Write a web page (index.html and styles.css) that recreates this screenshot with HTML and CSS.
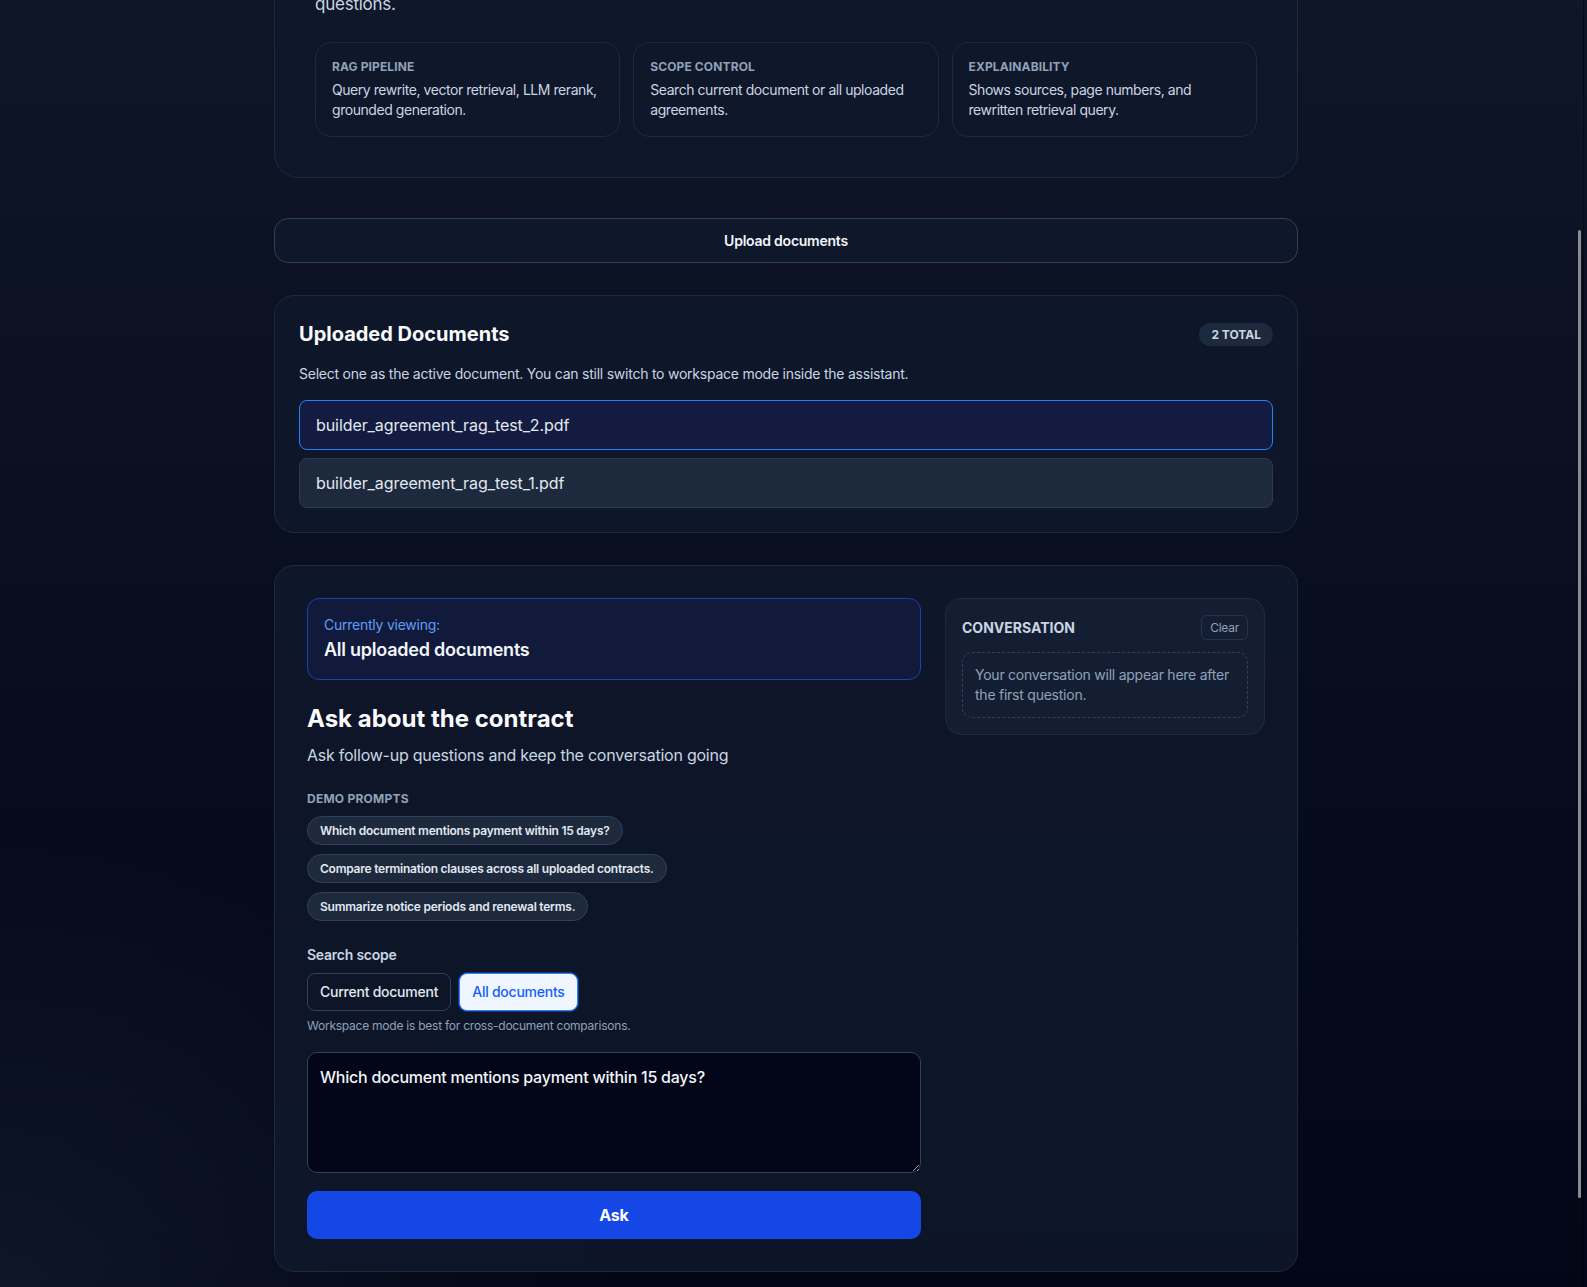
FILE: index.html
```html
<!DOCTYPE html>
<html lang="en">
<head>
  <meta charset="UTF-8">
  <title>Builder Agreement Assistant</title>
  <link rel="stylesheet" href="styles.css">
</head>
<body>

  <main class="page">

    <header class="topbar">
      <span class="brand">Contract Assistant</span>
      <span class="topbar-note">RAG demo</span>
    </header>

    <section class="card hero">
      <p class="eyebrow">Contract copilot</p>
      <h1>Builder Agreement Assistant</h1>
      <p class="hero-text">Upload builder agreements and get grounded, cited answers to your contract questions.</p>

      <div class="features">
        <div class="feature">
          <div class="feature-title">RAG Pipeline</div>
          <p>Query rewrite, vector retrieval, LLM rerank, grounded generation.</p>
        </div>
        <div class="feature">
          <div class="feature-title">Scope Control</div>
          <p>Search current document or all uploaded agreements.</p>
        </div>
        <div class="feature">
          <div class="feature-title">Explainability</div>
          <p>Shows sources, page numbers, and rewritten retrieval query.</p>
        </div>
      </div>
    </section>

    <button class="upload-btn" type="button">Upload documents</button>

    <section class="card docs">
      <div class="docs-head">
        <h2>Uploaded Documents</h2>
        <span class="badge">2 total</span>
      </div>
      <p class="docs-desc">Select one as the active document. You can still switch to workspace mode inside the assistant.</p>
      <div class="doc-list">
        <button class="doc-item active" type="button">builder_agreement_rag_test_2.pdf</button>
        <button class="doc-item" type="button">builder_agreement_rag_test_1.pdf</button>
      </div>
    </section>

    <section class="card assistant">
      <div class="ask-col">
        <div class="viewing">
          <div class="viewing-label">Currently viewing:</div>
          <div class="viewing-name">All uploaded documents</div>
        </div>

        <h2 class="ask-title">Ask about the contract</h2>
        <p class="ask-sub">Ask follow-up questions and keep the conversation going</p>

        <div class="small-label">Demo prompts</div>
        <div class="prompts">
          <button class="chip" type="button">Which document mentions payment within 15 days?</button>
          <button class="chip" type="button">Compare termination clauses across all uploaded contracts.</button>
          <button class="chip" type="button">Summarize notice periods and renewal terms.</button>
        </div>

        <div class="scope-label">Search scope</div>
        <div class="scope">
          <button class="scope-btn" type="button">Current document</button>
          <button class="scope-btn selected" type="button">All documents</button>
        </div>
        <p class="hint">Workspace mode is best for cross-document comparisons.</p>

        <textarea class="question">Which document mentions payment within 15 days?</textarea>
        <button class="ask-btn" type="button">Ask</button>
      </div>

      <aside class="conversation">
        <div class="conv-head">
          <span class="conv-title">Conversation</span>
          <button class="clear-btn" type="button">Clear</button>
        </div>
        <div class="conv-empty">Your conversation will appear here after the first question.</div>
      </aside>
    </section>

  </main>

  <div class="scroll-rail"><div class="scroll-thumb"></div></div>

  <script>
    // jump past the intro so the assistant is in view
    window.scrollTo(0, 305);

    // thin scroll indicator on the right edge
    const thumb = document.querySelector(".scroll-thumb");

    function updateThumb() {
      const vh = window.innerHeight;
      const total = document.documentElement.scrollHeight;
      thumb.style.top = (window.scrollY / total) * vh + "px";
      thumb.style.height = (vh / total) * vh + "px";
    }

    updateThumb();
    window.addEventListener("scroll", updateThumb);
  </script>

</body>
</html>
```

FILE: styles.css
```css
html {
  color-scheme: dark;
}

* {
  box-sizing: border-box;
}

body {
  margin: 0;
  padding-right: 15px;
  font-family: Inter, "Noto Sans", sans-serif;
  letter-spacing: -0.015em;
  color: #e2e8f0;
  min-height: 100vh;
  background:
    radial-gradient(ellipse 55% 50% at 0% 100%, rgba(30, 41, 59, 0.45), transparent 70%),
    linear-gradient(180deg, #0f1628 0%, #070c1d 60%, #020617 100%);
  background-attachment: fixed;
}

button,
textarea {
  font-family: inherit;
  letter-spacing: inherit;
}

.page {
  max-width: 1024px;
  margin: 0 auto;
  padding: 48px 0 133px;
  display: flex;
  flex-direction: column;
  gap: 32px;
}

.card {
  background: rgba(15, 23, 43, 0.85);
  border: 1px solid #1d293d;
  border-radius: 24px;
}

/* top bar */

.topbar {
  height: 40px;
  display: flex;
  align-items: center;
  justify-content: space-between;
}

.brand {
  font-size: 18px;
  font-weight: 700;
  color: #f8fafc;
}

.topbar-note {
  font-size: 13px;
  color: #90a1b9;
}

/* intro */

.hero {
  padding: 40px;
  margin-bottom: 8px;
}

.eyebrow {
  margin: 0;
  font-size: 12px;
  line-height: 16px;
  font-weight: 700;
  letter-spacing: 0.08em;
  text-transform: uppercase;
  color: #51a2ff;
}

.hero h1 {
  margin: 16px 0 0;
  font-size: 44px;
  line-height: 52px;
  letter-spacing: -0.02em;
  color: #f8fafc;
}

.hero-text {
  margin: 22px 0 0;
  max-width: 620px;
  font-size: 17px;
  line-height: 28px;
  color: #cad5e2;
}

.features {
  display: grid;
  grid-template-columns: repeat(3, 1fr);
  gap: 12.8px;
  margin-top: 24px;
}

.feature {
  padding: 16px;
  border: 1px solid #1d293d;
  border-radius: 16px;
  background: rgba(15, 23, 43, 0.6);
}

.feature-title {
  margin-bottom: 5px;
  font-size: 12px;
  line-height: 16px;
  font-weight: 700;
  letter-spacing: 0.01em;
  text-transform: uppercase;
  color: #90a1b9;
}

.feature p {
  margin: 0;
  font-size: 14px;
  line-height: 20px;
  letter-spacing: -0.032em;
  color: #cad5e2;
}

/* upload */

.upload-btn {
  display: block;
  width: 100%;
  padding: 12px;
  font-size: 14px;
  line-height: 19px;
  font-weight: 600;
  color: #f1f5f9;
  background: #0f172b;
  border: 1px solid #314158;
  border-radius: 14px;
  cursor: pointer;
}

/* documents */

.docs {
  padding: 24px;
  border-radius: 20px;
}

.docs-head {
  display: flex;
  justify-content: space-between;
  align-items: center;
}

.docs-head h2 {
  margin: 0;
  font-size: 20px;
  line-height: 28px;
  font-weight: 700;
  letter-spacing: 0;
  color: #f8fafc;
}

.badge {
  padding: 4px 12px;
  font-size: 12px;
  line-height: 15px;
  font-weight: 700;
  letter-spacing: 0;
  text-transform: uppercase;
  color: #cad5e2;
  background: #1d293d;
  border-radius: 999px;
}

.docs-desc {
  margin: 16px 0 0;
  font-size: 14px;
  line-height: 20px;
  color: #cad5e2;
}

.doc-list {
  display: flex;
  flex-direction: column;
  gap: 8px;
  margin-top: 16px;
}

.doc-item {
  width: 100%;
  padding: 12px 16px;
  text-align: left;
  font-size: 16px;
  line-height: 24px;
  letter-spacing: -0.005em;
  color: #e2e8f0;
  background: #1d293d;
  border: 1px solid #2c394e;
  border-radius: 8px;
  cursor: pointer;
}

.doc-item.active {
  background: #131c40;
  border-color: #2b7fff;
}

/* assistant */

.assistant {
  padding: 32px;
  border-radius: 20px;
  display: grid;
  grid-template-columns: 1fr 320px;
  gap: 24px;
  align-items: start;
}

.viewing {
  padding: 16px;
  background: #111a3b;
  border: 1px solid #1e3fae;
  border-radius: 12px;
}

.viewing-label {
  font-size: 14px;
  line-height: 20px;
  color: #5f9ef5;
}

.viewing-name {
  margin-top: 2px;
  font-size: 18px;
  line-height: 26px;
  font-weight: 600;
  color: #f1f5f9;
}

.ask-title {
  margin: 23px 0 0;
  font-size: 24px;
  line-height: 32px;
  font-weight: 700;
  letter-spacing: 0;
  color: #f8fafc;
}

.ask-sub {
  margin: 8px 0 0;
  font-size: 16px;
  line-height: 24px;
  color: #cad5e2;
}

.small-label {
  margin-top: 24px;
  font-size: 12px;
  line-height: 16px;
  font-weight: 700;
  letter-spacing: 0.02em;
  text-transform: uppercase;
  color: #90a1b9;
}

.prompts {
  display: flex;
  flex-direction: column;
  align-items: flex-start;
  gap: 9px;
  margin-top: 9px;
}

.chip {
  padding: 6px 12px;
  font-size: 12px;
  line-height: 15px;
  font-weight: 600;
  color: #e2e8f0;
  background: #1d293d;
  border: 1px solid #314158;
  border-radius: 999px;
  cursor: pointer;
}

.scope-label {
  margin-top: 24px;
  font-size: 14px;
  line-height: 20px;
  font-weight: 600;
  color: #cad5e2;
}

.scope {
  display: flex;
  gap: 8px;
  margin-top: 8px;
}

.scope-btn {
  padding: 8px 12px;
  font-size: 14px;
  line-height: 20px;
  font-weight: 500;
  color: #e2e8f0;
  background: transparent;
  border: 1px solid #314158;
  border-radius: 8px;
  cursor: pointer;
}

.scope-btn.selected {
  color: #155dfc;
  background: #eff6ff;
  border-color: #2b7fff;
  box-shadow: 0 0 0 1px rgba(43, 127, 255, 0.35);
}

.hint {
  margin: 7px 0 0;
  font-size: 12px;
  line-height: 16px;
  color: #90a1b9;
}

.question {
  display: block;
  width: 100%;
  height: 121px;
  margin-top: 18px;
  padding: 12px;
  font-size: 16px;
  line-height: 24px;
  font-weight: 500;
  color: #f1f5f9;
  background: #020618;
  border: 1px solid #314158;
  border-radius: 10px;
  resize: vertical;
}

.ask-btn {
  display: block;
  width: 100%;
  margin-top: 18px;
  padding: 12px;
  font-size: 16px;
  line-height: 24px;
  font-weight: 700;
  color: #fff;
  background: #1447e6;
  border: none;
  border-radius: 10px;
  cursor: pointer;
}

/* conversation panel */

.conversation {
  padding: 16px;
  background: #141e33;
  border: 1px solid #1f2a3e;
  border-radius: 16px;
}

.conv-head {
  display: flex;
  justify-content: space-between;
  align-items: center;
}

.conv-title {
  font-size: 14px;
  line-height: 20px;
  font-weight: 700;
  letter-spacing: 0;
  text-transform: uppercase;
  color: #cad5e2;
}

.clear-btn {
  padding: 4px 8px;
  font-size: 12px;
  line-height: 15px;
  color: #90a1b9;
  background: transparent;
  border: 1px solid #27334a;
  border-radius: 6px;
  cursor: pointer;
}

.conv-empty {
  margin-top: 12px;
  padding: 12px;
  font-size: 14px;
  line-height: 20px;
  color: #90a1b9;
  border: 1px dashed #314158;
  border-radius: 10px;
}

/* scroll indicator */

.scroll-rail {
  position: fixed;
  top: 0;
  right: 0;
  bottom: 0;
  width: 15px;
}

.scroll-rail::after {
  content: "";
  position: absolute;
  top: 0;
  bottom: 0;
  left: 11px;
  width: 1px;
  background: rgba(0, 0, 0, 0.45);
}

.scroll-thumb {
  position: absolute;
  left: 6px;
  width: 3px;
  border-radius: 2px;
  background: #878b92;
}
```
